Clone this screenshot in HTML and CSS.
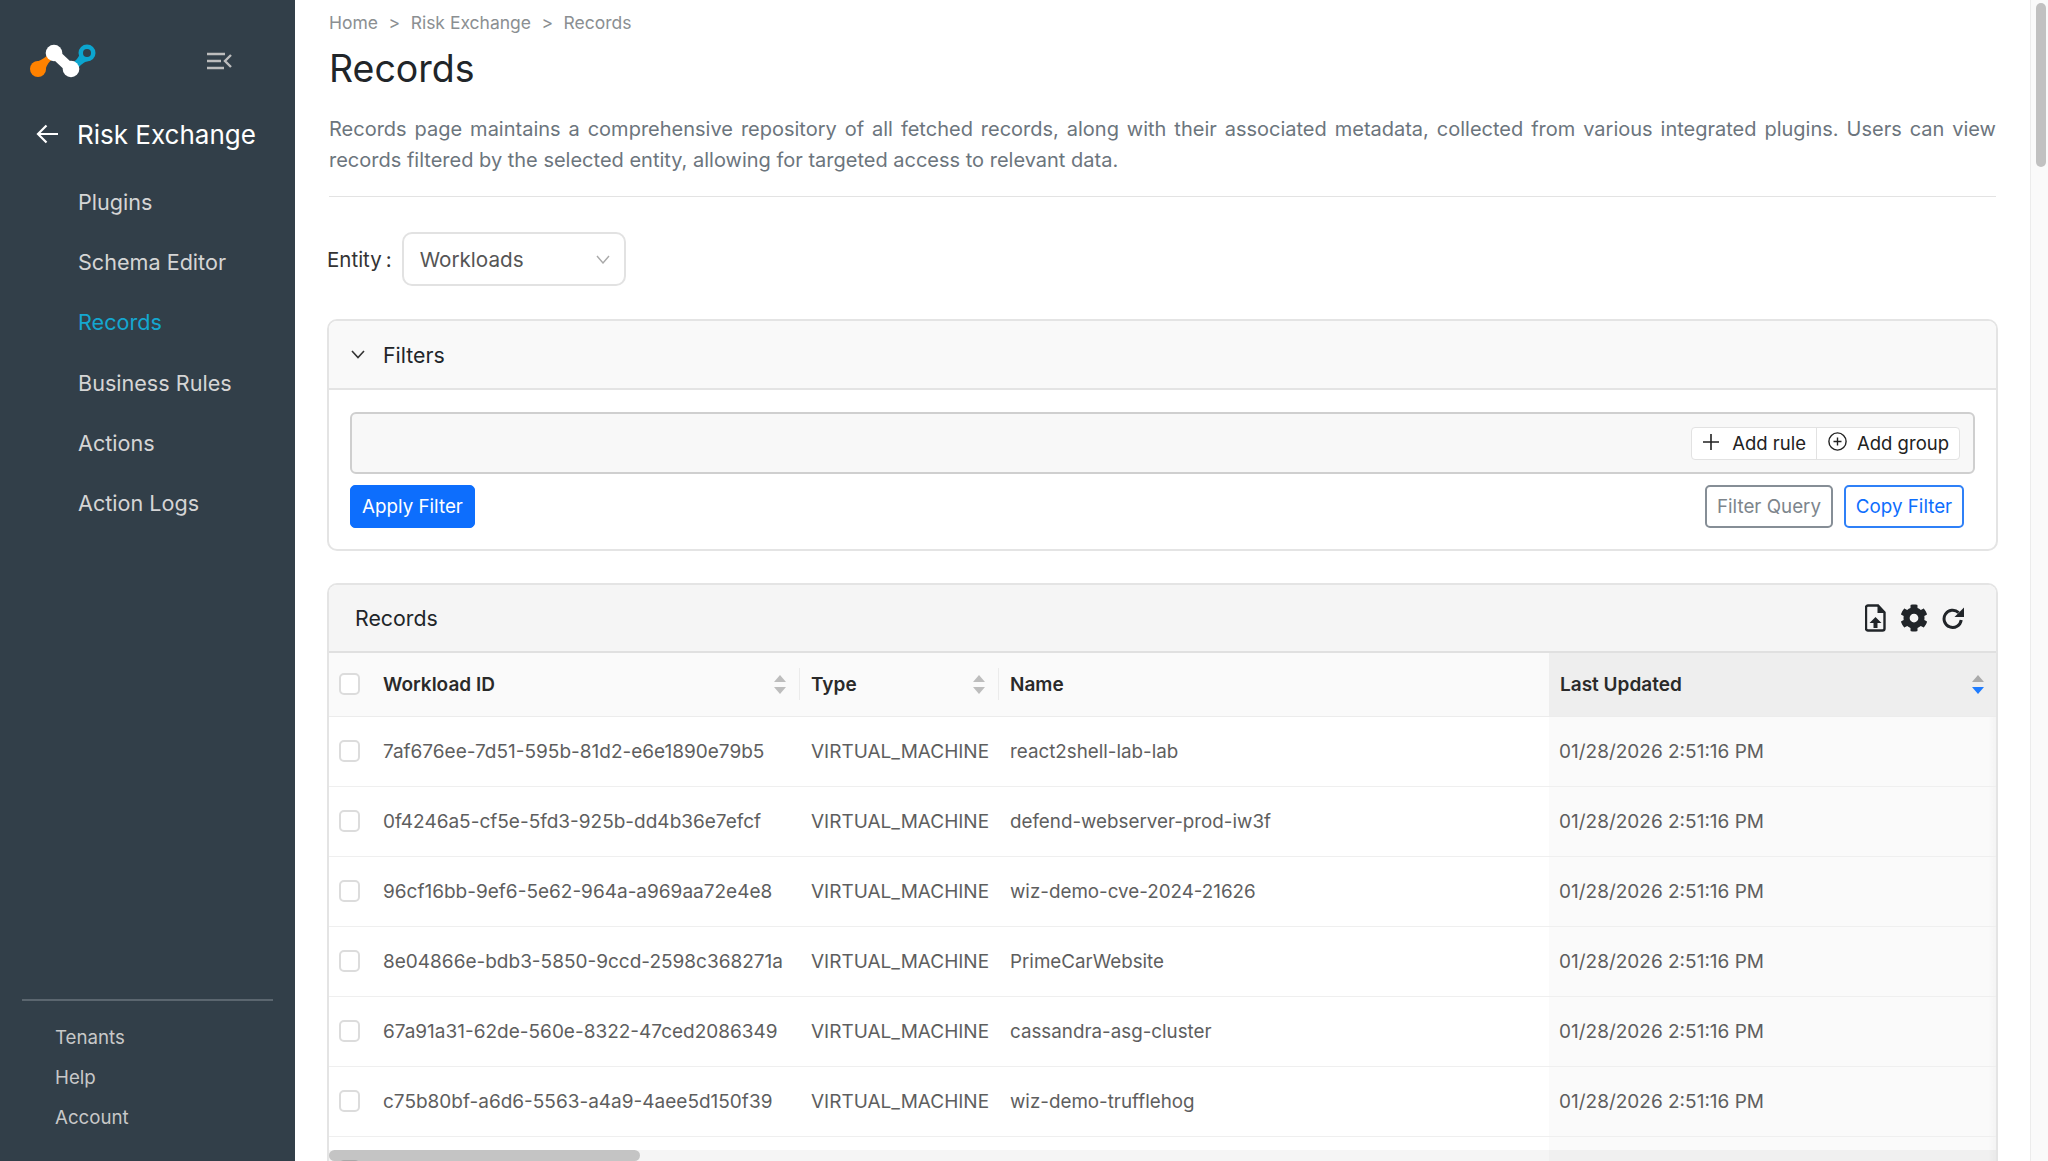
FILE: index.html
```html
<!DOCTYPE html>
<html lang="en">
<head>
    <meta charset="UTF-8">
    <meta name="viewport" content="width=device-width, initial-scale=1.0">
    <title>Records - Risk Exchange</title>
    <link rel="stylesheet" href="styles.css">
</head>
<body>
    <aside class="sidebar">
        <div class="sidebar-top">
            <svg class="logo" width="68" height="34" viewBox="0 0 68 34">
                <path d="M5 19 Q13 17 20 11 L24 15 Q17 22 17 29 Z" fill="#ff8200"/>
                <circle cx="10" cy="25" r="8" fill="#ff8200"/>
                <path d="M52 5 Q53 12 46 18 L50 24 Q56 17 63 16 Z" fill="#0ca5cf"/>
                <circle cx="59" cy="9" r="8.5" fill="#0ca5cf"/>
                <circle cx="59" cy="9" r="4" fill="#323f49"/>
                <circle cx="26" cy="9" r="8.3" fill="#fff"/>
                <circle cx="43" cy="25" r="8.3" fill="#fff"/>
                <path d="M26 9 L43 25" stroke="#fff" stroke-width="10" fill="none"/>
            </svg>
            <svg class="collapse-icon" width="26" height="18" viewBox="0 0 26 18" fill="none" stroke="#bdbdbd" stroke-width="2.4">
                <path d="M1 2H19M1 9H15M1 16H18"/>
                <path d="M25 3L19 9L25 15"/>
            </svg>
        </div>
        <div class="sidebar-title">
            <svg width="22" height="20" viewBox="0 0 22 20" fill="none" stroke="#fff" stroke-width="2.2">
                <path d="M22 10H2M10.5 1.5L2 10L10.5 18.5"/>
            </svg>
            <span>Risk Exchange</span>
        </div>
        <nav class="side-nav">
            <a href="#">Plugins</a>
            <a href="#">Schema Editor</a>
            <a href="#" class="active">Records</a>
            <a href="#">Business Rules</a>
            <a href="#">Actions</a>
            <a href="#">Action Logs</a>
        </nav>
        <div class="sidebar-bottom">
            <a href="#">Tenants</a>
            <a href="#">Help</a>
            <a href="#">Account</a>
        </div>
    </aside>

    <main class="content">
        <div class="breadcrumb">
            <a href="#">Home</a><span class="sep">&gt;</span><a href="#">Risk Exchange</a><span class="sep">&gt;</span><span>Records</span>
        </div>
        <h1>Records</h1>
        <p class="page-desc">Records page maintains a comprehensive repository of all fetched records, along with their associated metadata, collected from various integrated plugins. Users can view records filtered by the selected entity, allowing for targeted access to relevant data.</p>
        <hr class="divider">

        <div class="entity-row">
            <label>Entity<span class="colon">:</span></label>
            <div class="select-box">
                <span>Workloads</span>
                <svg width="14" height="9" viewBox="0 0 14 9" fill="none" stroke="#a9a9a9" stroke-width="1.4">
                    <path d="M1 1L7 8L13 1"/>
                </svg>
            </div>
        </div>

        <section class="card filters-card">
            <div class="filters-head">
                <svg width="14" height="9" viewBox="0 0 14 9" fill="none" stroke="#333" stroke-width="1.6">
                    <path d="M1 1L7 7.5L13 1"/>
                </svg>
                <span>Filters</span>
            </div>
            <div class="filters-body">
                <div class="query-box">
                    <div class="query-actions">
                        <button class="query-btn" type="button">
                            <svg class="raised" width="16" height="16" viewBox="0 0 16 16" fill="none" stroke="#222" stroke-width="1.6">
                                <path d="M8 0V16M0 8H16"/>
                            </svg>
                            Add rule
                        </button>
                        <button class="query-btn" type="button">
                            <svg class="raised" width="19" height="19" viewBox="0 0 19 19" fill="none" stroke="#222" stroke-width="1.4">
                                <circle cx="9.5" cy="9.5" r="8.6"/>
                                <path d="M9.5 5.5V13.5M5.5 9.5H13.5"/>
                            </svg>
                            Add group
                        </button>
                    </div>
                </div>
                <div class="filter-buttons">
                    <button class="btn btn-primary" type="button">Apply Filter</button>
                    <div class="btn-group-right">
                        <button class="btn btn-outline-grey" type="button">Filter Query</button>
                        <button class="btn btn-outline-blue" type="button">Copy Filter</button>
                    </div>
                </div>
            </div>
        </section>

        <section class="card records-card">
            <div class="records-head">
                <span>Records</span>
                <div class="records-tools">
                    <svg width="21" height="28" viewBox="0 0 21 28">
                        <path d="M3 1.5H13L19.5 8.5V24.5a2 2 0 0 1-2 2H3a2 2 0 0 1-2-2V3.5a2 2 0 0 1 2-2z" fill="none" stroke="#212529" stroke-width="2.4"/>
                        <path d="M12.5 1.5V9H19.5z" fill="#212529"/>
                        <path d="M10.5 13L4.5 19H8.5V24H12.5V19H16.5z" fill="#212529"/>
                    </svg>
                    <svg width="28" height="28" viewBox="0 0 512 512">
                        <path fill="#212529" d="M487.4 315.7l-42.6-24.6c4.3-23.2 4.3-47 0-70.2l42.6-24.6c4.9-2.8 7.1-8.6 5.5-14-11.1-35.6-30-67.8-54.7-94.6-3.8-4.1-10-5.1-14.8-2.3L380.8 110c-17.9-15.4-38.5-27.3-60.8-35.1V25.8c0-5.6-3.9-10.5-9.4-11.7-36.7-8.2-74.3-7.8-109.2 0-5.5 1.2-9.4 6.1-9.4 11.7V75c-22.2 7.9-42.8 19.8-60.8 35.1L88.7 85.5c-4.9-2.8-11-1.9-14.8 2.3-24.7 26.7-43.6 58.9-54.7 94.6-1.7 5.4.6 11.2 5.5 14L67.3 221c-4.3 23.2-4.3 47 0 70.2l-42.6 24.6c-4.9 2.8-7.1 8.6-5.5 14 11.1 35.6 30 67.8 54.7 94.6 3.8 4.1 10 5.1 14.8 2.3l42.6-24.6c17.9 15.4 38.5 27.3 60.8 35.1v49.2c0 5.6 3.9 10.5 9.4 11.7 36.7 8.2 74.3 7.8 109.2 0 5.5-1.2 9.4-6.1 9.4-11.7v-49.2c22.2-7.9 42.8-19.8 60.8-35.1l42.6 24.6c4.9 2.8 11 1.9 14.8-2.3 24.7-26.7 43.6-58.9 54.7-94.6 1.5-5.5-.7-11.3-5.6-14.1zM256 336c-44.1 0-80-35.9-80-80s35.9-80 80-80 80 35.9 80 80-35.9 80-80 80z"/>
                    </svg>
                    <svg width="23" height="23" viewBox="0 0 23 23">
                        <path d="M19.2 13a8.6 8.6 0 1 1-2.6-7.4" fill="none" stroke="#212529" stroke-width="3"/>
                        <path d="M22 0.5V10H12.5z" fill="#212529"/>
                    </svg>
                </div>
            </div>
            <div class="table-wrap">
                <table class="records-table">
                    <colgroup>
                        <col class="col-check">
                        <col class="col-id">
                        <col class="col-type">
                        <col class="col-name">
                        <col class="col-updated">
                    </colgroup>
                    <thead>
                        <tr>
                            <th><span class="check"></span></th>
                            <th><div class="th-inner">Workload ID<span class="sort"><i class="up"></i><i class="down"></i></span></div></th>
                            <th><div class="th-inner">Type<span class="sort"><i class="up"></i><i class="down"></i></span></div></th>
                            <th><div class="th-inner plain">Name</div></th>
                            <th class="sorted"><div class="th-inner plain">Last Updated<span class="sort"><i class="up dark"></i><i class="down blue"></i></span></div></th>
                        </tr>
                    </thead>
                    <tbody>
                        <tr>
                            <td><span class="check"></span></td>
                            <td>7af676ee-7d51-595b-81d2-e6e1890e79b5</td>
                            <td>VIRTUAL_MACHINE</td>
                            <td>react2shell-lab-lab</td>
                            <td class="sorted">01/28/2026 2:51:16 PM</td>
                        </tr>
                        <tr>
                            <td><span class="check"></span></td>
                            <td>0f4246a5-cf5e-5fd3-925b-dd4b36e7efcf</td>
                            <td>VIRTUAL_MACHINE</td>
                            <td>defend-webserver-prod-iw3f</td>
                            <td class="sorted">01/28/2026 2:51:16 PM</td>
                        </tr>
                        <tr>
                            <td><span class="check"></span></td>
                            <td>96cf16bb-9ef6-5e62-964a-a969aa72e4e8</td>
                            <td>VIRTUAL_MACHINE</td>
                            <td>wiz-demo-cve-2024-21626</td>
                            <td class="sorted">01/28/2026 2:51:16 PM</td>
                        </tr>
                        <tr>
                            <td><span class="check"></span></td>
                            <td>8e04866e-bdb3-5850-9ccd-2598c368271a</td>
                            <td>VIRTUAL_MACHINE</td>
                            <td>PrimeCarWebsite</td>
                            <td class="sorted">01/28/2026 2:51:16 PM</td>
                        </tr>
                        <tr>
                            <td><span class="check"></span></td>
                            <td>67a91a31-62de-560e-8322-47ced2086349</td>
                            <td>VIRTUAL_MACHINE</td>
                            <td>cassandra-asg-cluster</td>
                            <td class="sorted">01/28/2026 2:51:16 PM</td>
                        </tr>
                        <tr>
                            <td><span class="check"></span></td>
                            <td>c75b80bf-a6d6-5563-a4a9-4aee5d150f39</td>
                            <td>VIRTUAL_MACHINE</td>
                            <td>wiz-demo-trufflehog</td>
                            <td class="sorted">01/28/2026 2:51:16 PM</td>
                        </tr>
                        <tr>
                            <td><span class="check"></span></td>
                            <td></td>
                            <td></td>
                            <td></td>
                            <td class="sorted"></td>
                        </tr>
                    </tbody>
                </table>
                <div class="h-scroll"><div class="h-scroll-thumb"></div></div>
            </div>
        </section>
    </main>

    <div class="page-scroll"><div class="page-scroll-thumb"></div></div>
</body>
</html>
```

FILE: styles.css
```css
* {
    margin: 0;
    padding: 0;
    box-sizing: border-box;
}

html, body {
    height: 100%;
    overflow: hidden;
}

body {
    display: flex;
    font-family: Inter, "Liberation Sans", sans-serif;
    color: #212529;
    background: #fff;
}

a {
    color: inherit;
    text-decoration: none;
}

/* sidebar */
.sidebar {
    width: 295px;
    flex-shrink: 0;
    height: 100%;
    background: #323f49;
    display: flex;
    flex-direction: column;
}

.sidebar-top {
    display: flex;
    align-items: center;
    justify-content: space-between;
    padding: 44px 63px 0 28px;
    height: 78px;
}

.logo {
    display: block;
}

.sidebar-title {
    display: flex;
    align-items: center;
    gap: 19px;
    margin-top: 38px;
    padding-left: 36px;
    height: 36px;
    color: #fff;
    font-size: 26px;
}

.side-nav {
    display: flex;
    flex-direction: column;
    margin-top: 20px;
    padding-left: 78px;
}

.side-nav a {
    height: 60.2px;
    line-height: 60px;
    font-size: 21.6px;
    color: #d5d5d5;
}

.side-nav a.active {
    color: #14a7d0;
}

.sidebar-bottom {
    margin: auto 22px 0;
    padding: 17px 0 23px 33px;
    border-top: 2px solid #5b666f;
    display: flex;
    flex-direction: column;
}

.sidebar-bottom a {
    height: 40px;
    line-height: 40px;
    font-size: 18.7px;
    color: #c8c8c8;
}

/* main column */
.content {
    flex: 1;
    min-width: 0;
    height: 100%;
    padding: 11px 34px 0;
    display: flex;
    flex-direction: column;
    overflow: hidden;
}

.breadcrumb {
    font-size: 17.5px;
    line-height: 24px;
    color: #8b8f92;
    flex-shrink: 0;
}

.breadcrumb .sep {
    margin: 0 10.5px;
}

h1 {
    margin-top: 10px;
    font-size: 37.5px;
    line-height: 48px;
    font-weight: 400;
    flex-shrink: 0;
}

.page-desc {
    margin-top: 21px;
    font-size: 20px;
    line-height: 31px;
    color: #6c757d;
    text-align: justify;
    flex-shrink: 0;
}

.divider {
    margin-top: 20px;
    border: 0;
    border-top: 1px solid #e3e3e3;
    flex-shrink: 0;
}

.entity-row {
    margin: 35px 0 0 -2px;
    display: flex;
    align-items: center;
    gap: 10px;
    flex-shrink: 0;
}

.entity-row label {
    font-size: 20.5px;
    color: #333;
}

.colon {
    margin-left: 4px;
}

.select-box {
    width: 224px;
    height: 54px;
    padding: 0 14px 0 16px;
    border: 2px solid #e2e2e2;
    border-radius: 10px;
    display: flex;
    align-items: center;
    justify-content: space-between;
    font-size: 20.7px;
    color: #555;
}

.card {
    margin-left: -2px;
    margin-right: -2px;
    border: 2px solid #e4e4e4;
    border-radius: 10px;
}

/* filters */
.filters-card {
    margin-top: 33px;
    flex-shrink: 0;
}

.filters-head {
    height: 69px;
    padding-left: 22px;
    display: flex;
    align-items: center;
    gap: 18px;
    font-size: 21.3px;
    background: #f9f9f9;
    border-bottom: 2px solid #e4e4e4;
    border-radius: 8px 8px 0 0;
}

.filters-body {
    padding: 22px 21px 21px;
}

.query-box {
    height: 62px;
    padding-right: 13px;
    display: flex;
    align-items: center;
    justify-content: flex-end;
    background: #f8f8f8;
    border: 2px solid #cfcfcf;
    border-radius: 6px;
}

.query-actions {
    display: flex;
    height: 33px;
    background: #fff;
    border: 1px solid #e2e2e2;
    border-radius: 4px;
}

.query-btn {
    display: flex;
    align-items: center;
    gap: 13px;
    padding: 0 10px 0 11px;
    border: 0;
    background: none;
    font: inherit;
    font-size: 18.5px;
    color: #222;
}

.query-btn + .query-btn {
    gap: 10px;
    border-left: 1px solid #e2e2e2;
}

.raised {
    margin-bottom: 3px;
}

.filter-buttons {
    margin-top: 11px;
    display: flex;
    justify-content: space-between;
}

.btn-group-right {
    display: flex;
    gap: 11px;
    margin-right: 11px;
}

.btn {
    height: 43px;
    border-radius: 5px;
    font: inherit;
    font-size: 18.8px;
    background: #fff;
}

.btn-primary {
    width: 125px;
    background: #0d6efd;
    border: 1px solid #0d6efd;
    color: #fff;
}

.btn-outline-grey {
    width: 128px;
    border: 2px solid #868e96;
    color: #7d858c;
}

.btn-outline-blue {
    width: 120px;
    border: 2px solid #2f80f7;
    color: #0d6efd;
}

/* records table */
.records-card {
    margin-top: 32px;
    flex: 1;
    min-height: 0;
    border-bottom: 0;
    border-radius: 10px 10px 0 0;
    display: flex;
    flex-direction: column;
    overflow: hidden;
}

.records-head {
    height: 68px;
    flex-shrink: 0;
    padding: 0 31px 0 26px;
    display: flex;
    align-items: center;
    justify-content: space-between;
    font-size: 21.3px;
    background: #f5f5f5;
    border-bottom: 2px solid #e0e0e0;
}

.records-tools {
    display: flex;
    align-items: center;
    gap: 14px;
}

.table-wrap {
    position: relative;
    flex: 1;
    min-height: 0;
    overflow: hidden;
}

.records-table {
    width: 100%;
    table-layout: fixed;
    border-collapse: collapse;
}

.col-check { width: 43px; }
.col-id { width: 428px; }
.col-type { width: 199px; }
.col-name { width: 550px; }

.records-table th {
    height: 63px;
    padding: 0;
    text-align: left;
    font-size: 19px;
    font-weight: 600;
    color: #2a2a2a;
    background: #fafafa;
    border-bottom: 1px solid #ececec;
}

.th-inner {
    height: 32px;
    padding: 0 13px 0 11px;
    display: flex;
    align-items: center;
    justify-content: space-between;
    border-right: 1px solid #ebebeb;
}

.th-inner.plain {
    border-right: 0;
}

.records-table th.sorted {
    background: #eee;
}

.records-table th.sorted .th-inner {
    padding-right: 12px;
}

.records-table td {
    height: 70px;
    padding: 0 11px;
    font-size: 19px;
    color: #5e5e5e;
    white-space: nowrap;
    border-bottom: 1px solid #efefef;
    overflow: hidden;
}

.records-table td:nth-child(4) {
    font-size: 18.8px;
}

.records-table td.sorted {
    padding-left: 10px;
    background: linear-gradient(to left, #f3f3f3, #fafafa 8px);
}

.records-table th:first-child,
.records-table td:first-child {
    padding: 0 0 0 10px;
}

.check {
    display: block;
    width: 21px;
    height: 22px;
    background: #fff;
    border: 2px solid #dcdcdc;
    border-radius: 5px;
}

.sort {
    display: flex;
    flex-direction: column;
    gap: 5px;
}

.sort i {
    display: block;
    width: 0;
    height: 0;
    border-left: 6px solid transparent;
    border-right: 6px solid transparent;
}

.sort .up {
    border-bottom: 7px solid #bdbdbd;
}

.sort .down {
    border-top: 7px solid #bdbdbd;
}

.sort .up.dark {
    border-bottom-color: #aaa;
}

.sort .down.blue {
    border-top-color: #1f7cff;
}

.h-scroll {
    position: absolute;
    left: 0;
    right: 0;
    bottom: 0;
    height: 11px;
    background: rgba(0, 0, 0, 0.04);
}

.h-scroll-thumb {
    width: 311px;
    height: 100%;
    border-radius: 6px;
    background: rgba(0, 0, 0, 0.2);
}

/* page scrollbar */
.page-scroll {
    width: 18px;
    flex-shrink: 0;
    height: 100%;
    padding: 3px 2px 0 5px;
    background: #fafafa;
    border-left: 1px solid #ececec;
}

.page-scroll-thumb {
    width: 10px;
    height: 164px;
    border-radius: 5px;
    background: #c1c1c1;
}
```
